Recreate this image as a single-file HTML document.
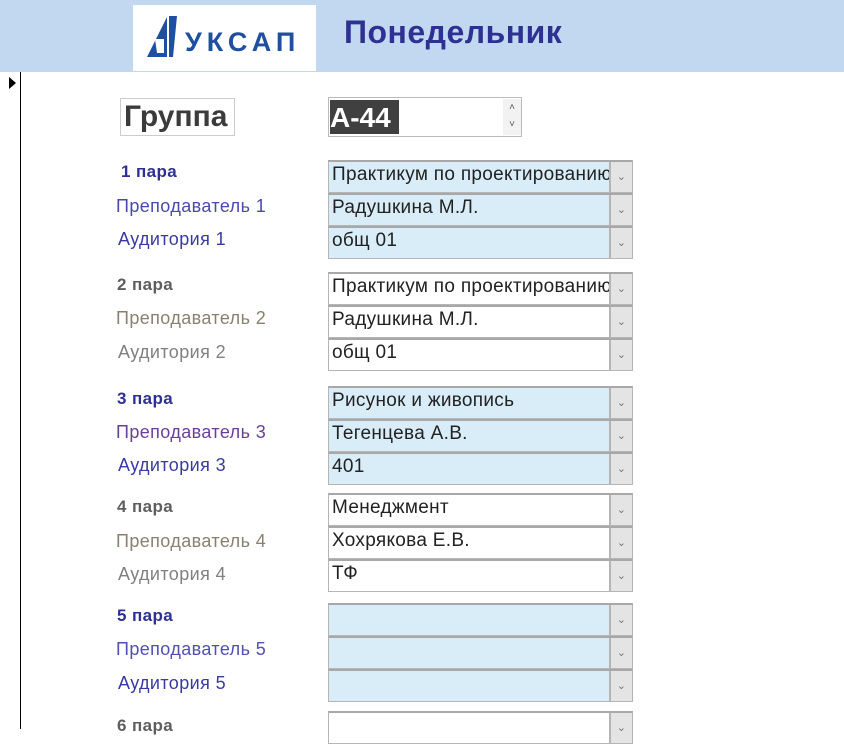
<!DOCTYPE html>
<html><head><meta charset="utf-8"><style>
body{margin:0;width:844px;height:729px;overflow:hidden;background:#fff;font-family:"Liberation Sans","DejaVu Sans",sans-serif;position:relative}
.hdr{position:absolute;left:0;top:0;width:844px;height:72px;background:#c2d8f1}
.logo{position:absolute;left:133px;top:5px;width:183px;height:66px;background:#fff}
.title{position:absolute;left:344px;top:14px;font-size:32px;font-weight:bold;color:#2e3192;letter-spacing:0.5px}
.vl{position:absolute;left:20px;top:72px;width:1px;height:657px;background:#000}
.a{position:absolute}
.cb{position:absolute;left:328px;width:305px;height:33px;box-sizing:border-box;border:1px solid #b5b5b5;border-top:2px solid #a8a8a8;font-size:19px;letter-spacing:0.3px;color:#222;padding:2px 0 0 3px;white-space:nowrap;overflow:hidden}
.cb.b{background:#d9edf8}
.cb .btn{position:absolute;right:0;top:0;width:21px;height:100%;background:#e4e4e4;border-left:2px solid #b5b5b5;color:#777;font-size:11px;text-align:center;line-height:30px}
.lb{position:absolute;font-size:18px;letter-spacing:0.4px;margin-top:1px}
.p{font-weight:bold;font-size:17px}
</style></head><body>
<div class="hdr"></div>
<div class="logo">
<svg width="183" height="66" viewBox="0 0 183 66">
<polygon points="34,12 34,52 14,52" fill="#1f4f9f"/>
<polygon points="36,11 44,11 40,52 36,52" fill="#1f4f9f"/>
<polygon points="22,34 31,34 31,48 24,48" fill="#fff"/>
<text x="52" y="46" font-family="Liberation Sans,sans-serif" font-weight="bold" font-size="27" fill="#1f4f9f" letter-spacing="5">УКСАП</text>
</svg></div>
<div class="title">Понедельник</div>
<div class="vl"></div>
<div class="a" style="left:9px;top:77px;width:0;height:0;border-left:7px solid #000;border-top:6px solid transparent;border-bottom:6px solid transparent"></div>
<div class="a" style="left:120px;top:98px;width:115px;height:38px;box-sizing:border-box;border:1px solid #ccc;font-size:30px;font-weight:bold;color:#3b3b3b;padding:1px 0 0 3px">Группа</div>
<div class="a" style="left:328px;top:97px;width:194px;height:40px;box-sizing:border-box;border:1px solid #bbb"></div>
<div class="a" style="left:330px;top:100px;width:69px;height:34px;background:#404040;color:#fff;font-size:28px;font-weight:bold;line-height:36px">А-44</div>
<div class="a" style="left:503px;top:99px;width:18px;height:36px;background:#f2f2f2;color:#555;font-size:10px;text-align:center;line-height:17px">˄<br>˅</div>

<div class="lb p" style="left:121px;top:161px;color:#2e3192">1 пара</div>
<div class="lb" style="left:116px;top:195px;color:#4a4aa8">Преподаватель 1</div>
<div class="lb" style="left:118px;top:228px;color:#3a3aa0">Аудитория 1</div>
<div class="cb b" style="top:160px">Практикум по проектированию<div class="btn">⌄</div></div>
<div class="cb b" style="top:193px">Радушкина М.Л.<div class="btn">⌄</div></div>
<div class="cb b" style="top:226px">общ 01<div class="btn">⌄</div></div>

<div class="lb p" style="left:117px;top:274px;color:#5e5e5e">2 пара</div>
<div class="lb" style="left:116px;top:307px;color:#8a8070">Преподаватель 2</div>
<div class="lb" style="left:118px;top:341px;color:#808080">Аудитория 2</div>
<div class="cb" style="top:272px">Практикум по проектированию<div class="btn">⌄</div></div>
<div class="cb" style="top:305px">Радушкина М.Л.<div class="btn">⌄</div></div>
<div class="cb" style="top:338px">общ 01<div class="btn">⌄</div></div>

<div class="lb p" style="left:117px;top:388px;color:#2e3192">3 пара</div>
<div class="lb" style="left:116px;top:421px;color:#6a3f98">Преподаватель 3</div>
<div class="lb" style="left:118px;top:454px;color:#3a3aa0">Аудитория 3</div>
<div class="cb b" style="top:386px">Рисунок и живопись<div class="btn">⌄</div></div>
<div class="cb b" style="top:419px">Тегенцева А.В.<div class="btn">⌄</div></div>
<div class="cb b" style="top:452px">401<div class="btn">⌄</div></div>

<div class="lb p" style="left:117px;top:496px;color:#5e5e5e">4 пара</div>
<div class="lb" style="left:116px;top:530px;color:#8a8070">Преподаватель 4</div>
<div class="lb" style="left:118px;top:563px;color:#808080">Аудитория 4</div>
<div class="cb" style="top:493px">Менеджмент<div class="btn">⌄</div></div>
<div class="cb" style="top:526px">Хохрякова Е.В.<div class="btn">⌄</div></div>
<div class="cb" style="top:559px">ТФ<div class="btn">⌄</div></div>

<div class="lb p" style="left:117px;top:605px;color:#2e3192">5 пара</div>
<div class="lb" style="left:116px;top:638px;color:#5050b0">Преподаватель 5</div>
<div class="lb" style="left:118px;top:672px;color:#3a3aa0">Аудитория 5</div>
<div class="cb b" style="top:603px"><div class="btn">⌄</div></div>
<div class="cb b" style="top:636px"><div class="btn">⌄</div></div>
<div class="cb b" style="top:669px"><div class="btn">⌄</div></div>

<div class="lb p" style="left:117px;top:715px;color:#5e5e5e">6 пара</div>
<div class="cb" style="top:711px"><div class="btn">⌄</div></div>
</body></html>
